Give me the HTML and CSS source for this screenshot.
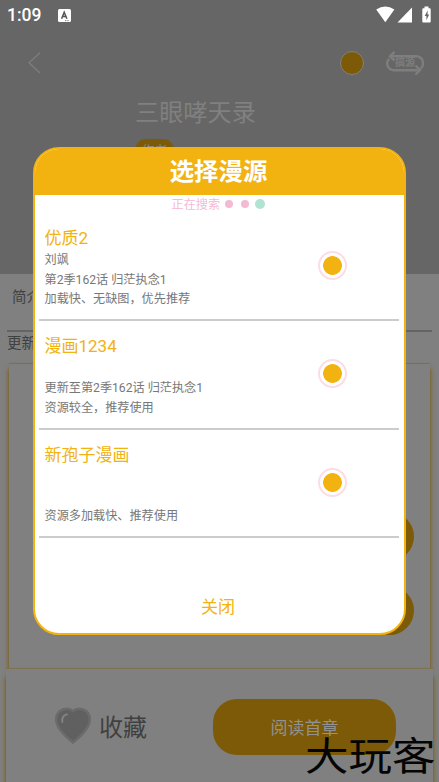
FILE: index.html
```html
<!DOCTYPE html>
<html lang="zh-CN">
<head>
<meta charset="utf-8">
<meta name="viewport" content="width=device-width, initial-scale=1">
<title>选择漫源</title>
<link rel="stylesheet" href="styles.css">
</head>
<body>
<div class="screen">
  <header class="hero">
    <div class="status">
      <span class="time">1:09</span>
      <svg class="app-icon" width="13" height="13" viewBox="0 0 13 13"><rect width="13" height="13" rx="1.5" fill="#fff"/><path d="M3.6 9.7 6.2 3.3 8.9 9.7M4.7 7.5h3.2" fill="none" stroke="#555" stroke-width="1.5"/><path d="M7 11.6h4" stroke="#777" stroke-dasharray="1 .7"/></svg>
      <svg class="signals" width="56" height="18" viewBox="0 0 56 18">
        <path d="M.2 3.5Q9.300-2.300 18.400 3.500L9.300 16.200Z" fill="#fff"/>
        <path d="M21.500 16.500H36V1.500Z" fill="#fff"/>
        <path d="M48.500.5h4v1.700h1.200q1 0 1 1v12.300q0 1-1 1h-6.400q-1 0-1-1V3.200q0-1 1-1h1.200Z" fill="#fff"/>
        <path d="M51.700 4.200 48.700 10h1.700v4.300l2.800-5.800h-1.700Z" fill="#666"/>
      </svg>
    </div>
    <nav class="toolbar">
      <svg width="14" height="22" viewBox="0 0 14 22"><path d="M12 .8 1 10.700 12 21" fill="none" stroke="#7d7d7d" stroke-width="1.400"/></svg>
      <span class="dot"></span>
      <span class="switch">
        <svg width="38" height="24" viewBox="0 0 38 24"><g fill="none" stroke="#7e7e7e" stroke-width="2.400"><path d="M4 5.300H30C38.300 5.300 38.300 16 34.500 17.500M3.300 8C-.5 11 1 19.200 8 19.200H33"/><path d="M8.500.8 4 5.300l4.500 4.200M29.500 14.500 34 19l-4.500 4.500"/></g></svg>
        <b>搞源</b>
      </span>
    </nav>
    <h1>三眼哮天录</h1>
    <span class="tag">作者</span>
  </header>
  <section class="summary">
    <p class="intro">简介</p>
    <p class="update">更新</p>
  </section>
  <section class="chapters"><i></i><i></i></section>
  <footer class="bar">
    <svg width="38" height="38" viewBox="0 0 38 38"><path d="M19 35.500C14 31.500 2.200 22 2.200 12.500 2.200 1.500 14.500-.5 19 4.200 23.500-.5 35.800 1.500 35.800 12.500 35.800 22 24 31.500 19 35.500Z" fill="#606060" stroke="#6b6b6b" stroke-width="2.500"/><path d="M8.300 15.200C7.800 10.800 9.500 8 13 7.400" fill="none" stroke="#858585" stroke-width="1.800" stroke-linecap="round"/></svg>
    <span class="fav">收藏</span>
    <span class="read">阅读首章</span>
  </footer>

  <div class="dialog">
    <h2>选择漫源</h2>
    <div class="loading">正在搜索<i></i><i></i><i></i></div>
    <ul>
      <li><div><h3>优质2</h3><p>刘飒</p><p>第2季162话 归茫执念1</p><p>加载快、无缺图，优先推荐</p></div><span class="radio"></span></li>
      <li><div><h3>漫画1234</h3><p></p><p>更新至第2季162话 归茫执念1</p><p>资源较全，推荐使用</p></div><span class="radio"></span></li>
      <li><div><h3>新孢子漫画</h3><p></p><p></p><p>资源多加载快、推荐使用</p></div><span class="radio"></span></li>
    </ul>
    <div class="close">关闭</div>
  </div>
  <div class="watermark">大玩客</div>
</div>
</body>
</html>
```
FILE: styles.css
```css
* { box-sizing: border-box; margin: 0; padding: 0; }
body { font-family: Roboto, "Noto Sans CJK SC", sans-serif; background: #808080; }
h1, h2, h3 { font-weight: 400; }
i { font-style: normal; }
.screen { position: relative; width: 439px; height: 782px; overflow: hidden; background: #808080; display: flex; flex-direction: column; }

.hero { height: 274px; background: #666; flex: none; }
.status { height: 30px; display: flex; align-items: center; padding: 0 7px 0 7px; color: #fff; }
.time { width: 51px; font-size: 17.5px; font-weight: 500; }
.signals { margin-left: auto; margin-top: -1px; }
.toolbar { height: 66px; display: flex; align-items: center; padding: 0 15px 0 28px; }
.dot { width: 24px; height: 24px; margin-left: auto; border-radius: 50%; background: #7c5a08; border: 1.5px solid #808080; }
.switch { display: grid; margin-left: 22px; width: 38px; }
.switch svg, .switch b { grid-area: 1 / 1; }
.switch b { font-size: 10px; line-height: 24px; text-align: center; color: #7e7e7e; }
.hero h1 { padding: 1px 0 0 135px; font-size: 24.2px; line-height: 32px; color: #808080; }
.tag { display: block; width: 39px; height: 24px; margin: 10px 0 0 135px; border-radius: 11px; background: #7c5a08; color: #858585; font-size: 13px; line-height: 24px; text-align: center; }

.summary { height: 89px; flex: none; padding: 0 7px; color: #404040; font-size: 14.5px; }
.intro { height: 58px; padding: 13px 0 0 5px; line-height: 22px; border-bottom: 2px solid #646464; }
.update { line-height: 24px; }
.chapters { height: 306px; flex: none; margin: 1px 9px 0; background: #808080; box-shadow: 3px 3px 4px -2px #7d6220, -3px 3px 4px -2px #7d6220, 0 -1px 1px 0 #7e7250; padding: 148px 16px 0 0; display: flex; flex-direction: column; align-items: flex-end; gap: 25px; }
.chapters i { width: 90px; height: 49px; border-radius: 25px; background: #7c5a08; }
.bar { height: 113px; flex: none; margin: -1px 6px 0; background: #808080; box-shadow: 3px 6px 4px -2px #7d6220, -3px 6px 4px -2px #7d6220, 0 -1px 1px 0 #7e7250; display: flex; align-items: flex-start; }
.bar svg { margin: 38px 0 0 48px; }
.fav { width: 114px; margin: 42px 0 0 7px; font-size: 24px; line-height: 34px; color: #404040; }
.read { width: 183px; height: 56px; margin-top: 30px; border-radius: 24px; background: #7c5a08; color: #929292; font-size: 17px; line-height: 59px; text-align: center; }

.dialog { position: absolute; left: 32.5px; top: 147px; width: 373px; height: 488px; border: 2px solid #f2b20f; border-radius: 26px; background: #fff; overflow: hidden; }
.dialog h2 { height: 46px; padding-right: 1px; background: #f2b20f; color: #fff; font-size: 24.4px; font-weight: 700; line-height: 46px; text-align: center; }
.loading { height: 18px; display: flex; align-items: center; padding-left: 137px; font-size: 12.2px; color: #f6b9d4; }
.loading i { width: 8px; height: 8px; margin-left: 8px; border-radius: 50%; background: #f6b9d4; }
.loading i:first-child { margin-left: 5px; }
.loading i:last-child { width: 10px; height: 10px; margin-left: 6px; background: #b0e3d2; }
.dialog ul { list-style: none; margin: 0 5px 0 4px; }
.dialog li { height: 108.4px; display: flex; justify-content: space-between; padding: 12px 52px 0 6px; border-bottom: 2px solid #ccc; }
.dialog h3 { height: 25px; font-size: 17px; line-height: 27px; color: #f2b20f; }
.dialog p { height: 19.6px; font-size: 12.15px; line-height: 20.6px; color: #777; }
.radio { width: 29px; height: 29px; margin-top: 26px; border: 2px solid #fddde3; border-radius: 50%; background: radial-gradient(circle, #f2b20f 9px, #fff 9.7px); }
.close { margin-top: 56px; padding-right: 2px; font-size: 17px; line-height: 26px; text-align: center; color: #f2b20f; }
.watermark { position: absolute; left: 305px; top: 728px; font-family: "Noto Sans CJK SC", sans-serif; font-size: 43.5px; line-height: 52px; color: #050505; transform: scaleY(.88); white-space: nowrap; }
```
